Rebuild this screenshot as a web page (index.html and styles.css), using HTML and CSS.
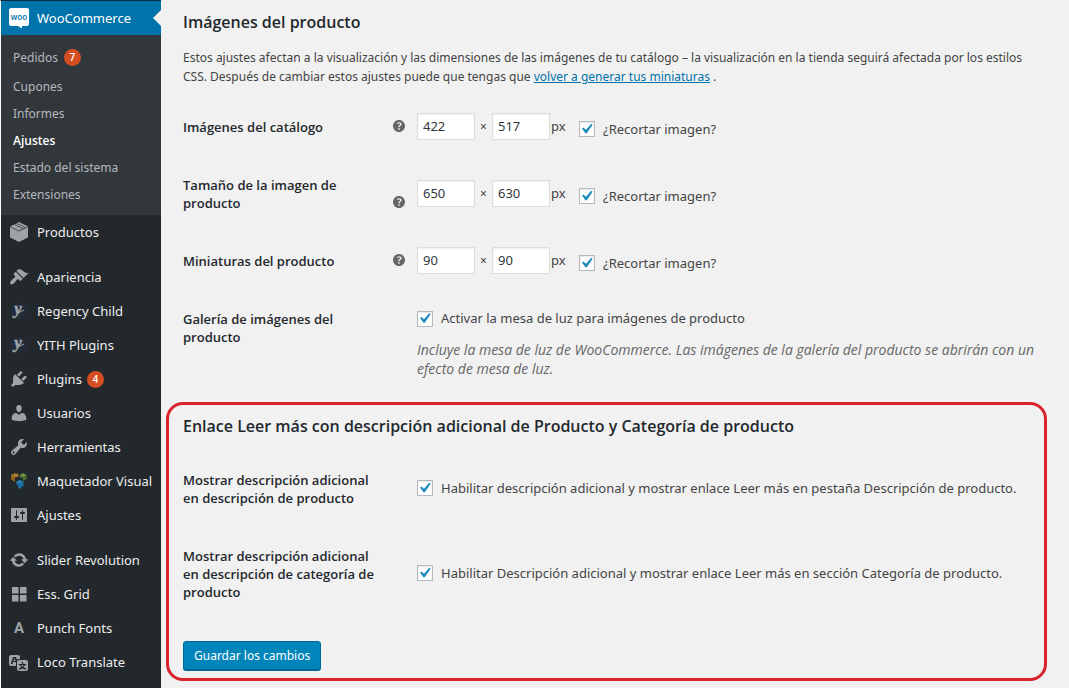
FILE: index.html
```html
<!DOCTYPE html>
<html lang="es">
<head>
<meta charset="utf-8">
<title>Ajustes de WooCommerce</title>
<link rel="stylesheet" href="styles.css">
</head>
<body>
<div class="admin">
  <nav class="sidebar" aria-label="Menú principal">
    <a class="item current" href="#">
      <svg class="icon" viewBox="0 0 20 20" aria-hidden="true"><path fill="#fff" d="M2 0h16a2 2 0 0 1 2 2v14a2 2 0 0 1-2 2h-5v2.500l-4-2.500H2a2 2 0 0 1-2-2V2a2 2 0 0 1 2-2z"/><text x="10" y="12" text-anchor="middle" class="woo-text">woo</text></svg>
      <span>WooCommerce</span>
    </a>
    <div class="submenu">
      <a class="sub" href="#">Pedidos <span class="badge">7</span></a>
      <a class="sub" href="#">Cupones</a>
      <a class="sub" href="#">Informes</a>
      <a class="sub active" href="#">Ajustes</a>
      <a class="sub" href="#">Estado del sistema</a>
      <a class="sub" href="#">Extensiones</a>
    </div>
    <div class="group">
      <a class="item" href="#"><svg class="icon" viewBox="0 0 20 20" aria-hidden="true"><path d="M10 0l9 4.500v11L10 20l-9-4.500v-11z"/><path fill="none" stroke="#23282d" stroke-width=".7" d="M1 4.700l9 4.300 9-4.300M5.300 2.400l9 4.400M7.500 1.300l9 4.400"/></svg><span>Productos</span></a>
    </div>
    <div class="group">
      <a class="item" href="#"><svg class="icon" viewBox="0 0 20 20" aria-hidden="true"><path d="M14.480 11.060L7.410 3.990l1.500-1.500c.5-.56 2.300-.47 3.510.32 1.210.8 1.430 1.280 2.910 2.100 1.180.64 2.450 1.260 4.450.85zm-.71.71L6.700 4.700 4.930 6.470c-.39.39-.39 1.020 0 1.410l1.060 1.060c.39.39.39 1.030 0 1.420-.6.6-1.430 1.110-2.210 1.690-.35.26-.7.53-1.010.84C1.430 14.230.4 16.080 1.400 17.070c.99 1 2.840-.03 4.180-1.360.31-.31.58-.66.85-1.020.57-.78 1.080-1.610 1.690-2.210.39-.39 1.020-.39 1.410 0l1.060 1.060c.39.39 1.020.39 1.410 0z"/></svg><span>Apariencia</span></a>
      <a class="item" href="#"><svg class="icon" viewBox="0 0 20 20" aria-hidden="true"><circle cx="10" cy="10" r="8" fill="#232c3b"/><text x="9" y="13" text-anchor="middle" class="yith">y</text><path d="M9 12l6-3" stroke="#9ea3a8" stroke-width="1"/></svg><span>Regency Child</span></a>
      <a class="item" href="#"><svg class="icon" viewBox="0 0 20 20" aria-hidden="true"><circle cx="10" cy="10" r="8" fill="#232c3b"/><text x="9" y="13" text-anchor="middle" class="yith">y</text><path d="M9 12l6-3" stroke="#9ea3a8" stroke-width="1"/></svg><span>YITH Plugins</span></a>
      <a class="item" href="#"><svg class="icon" viewBox="0 0 20 20" aria-hidden="true"><path d="M13.110 4.360L9.870 7.600 8 5.730l3.240-3.240c.35-.34 1.050-.2 1.560.32.52.51.66 1.210.31 1.550zm-8 1.770l.91-1.120 9.010 9.010-1.190.84c-.71.71-2.630 1.160-3.820 1.160H6.140L4.900 17.260c-.59.59-1.540.59-2.120 0-.59-.58-.59-1.530 0-2.120l1.240-1.240v-3.880c0-1.130.4-3.190 1.090-3.890zm7.260 3.970l3.240-3.240c.34-.35 1.040-.21 1.550.31.52.51.66 1.210.31 1.550l-3.240 3.250z"/></svg><span>Plugins</span><span class="badge">4</span></a>
      <a class="item" href="#"><svg class="icon" viewBox="0 0 20 20" aria-hidden="true"><path d="M10 9.250c-2.270 0-2.730-3.440-2.730-3.440C7 4.020 7.820 2 9.970 2c2.160 0 2.980 2.020 2.710 3.810 0 0-.41 3.440-2.680 3.440zm0 2.570L12.720 10c2.390 0 4.520 2.330 4.520 4.530v2.490s-3.650 1.130-7.240 1.130c-3.650 0-7.240-1.130-7.240-1.130v-2.490c0-2.250 1.940-4.480 4.470-4.480z"/></svg><span>Usuarios</span></a>
      <a class="item" href="#"><svg class="icon" viewBox="0 0 20 20" aria-hidden="true"><path d="M16.680 9.770c-1.340 1.340-3.300 1.670-4.950.99l-5.410 6.520c-.99.99-2.590.99-3.580 0s-.99-2.590 0-3.570l6.520-5.420c-.68-1.650-.35-3.610.99-4.950 1.280-1.280 3.120-1.620 4.720-1.060l-2.890 2.890 2.820 2.820 2.860-2.870c.53 1.580.18 3.390-1.080 4.650zM3.810 16.210c.4.39 1.040.39 1.430 0 .4-.4.4-1.040 0-1.430-.39-.4-1.030-.4-1.430 0-.39.39-.39 1.030 0 1.430z"/></svg><span>Herramientas</span></a>
      <a class="item" href="#"><svg class="icon" viewBox="0 0 20 20" aria-hidden="true"><path fill="#a8792a" d="M2 4l3.500-1.800L9.500 3v2.500L6 6.500v4L2 8.500z"/><path fill="#8f631f" d="M2 4l4 2.500v4L2 8.500z"/><path fill="#6f9440" d="M10.500 4.500L14 2l3.500 2-3.500 2.500z"/><path fill="#4b7030" d="M17.500 4v4L14 10V6.500l-3.500-2v1.500l2 1.500z"/><path fill="#2888b8" d="M7 11l3.500-2 4 1.500-4 2.500z"/><path fill="#1b6fa0" d="M14.500 10.500v4.500L10.500 18v-5zM7 11l3.500 2v5L9 16.500V14l-2-1z"/></svg><span>Maquetador Visual</span></a>
      <a class="item" href="#"><svg class="icon" viewBox="0 0 20 20" aria-hidden="true"><path d="M18 16V4c0-.55-.45-1-1-1H3c-.55 0-1 .45-1 1v12c0 .55.45 1 1 1h14c.55 0 1-.45 1-1zM8 11h1c.55 0 1 .45 1 1s-.45 1-1 1H8v1.500c0 .28-.22.5-.5.5s-.5-.22-.5-.5V13H6c-.55 0-1-.45-1-1s.45-1 1-1h1V5.500c0-.28.22-.5.5-.5s.5.22.5.5V11zm5-2h-1c-.55 0-1-.45-1-1s.45-1 1-1h1V5.500c0-.28.22-.5.5-.5s.5.22.5.5V7h1c.55 0 1 .45 1 1s-.45 1-1 1h-1v5.500c0 .28-.22.5-.5.5s-.5-.22-.5-.5V9z"/></svg><span>Ajustes</span></a>
    </div>
    <div class="group">
      <a class="item" href="#"><svg class="icon" viewBox="0 0 20 20" aria-hidden="true"><path d="M10.200 3.280c3.530 0 6.430 2.610 6.920 6h2.080l-3.500 4-3.500-4h2.320c-.45-1.970-2.210-3.450-4.320-3.450-1.450 0-2.730.71-3.540 1.780L4.950 5.660C6.230 4.200 8.110 3.280 10.200 3.280zm-.4 13.440c-3.520 0-6.430-2.610-6.920-6H.8l3.500-4c1.170 1.330 2.330 2.670 3.500 4H5.480c.45 1.970 2.210 3.450 4.320 3.450 1.450 0 2.730-.71 3.540-1.780l1.710 1.950c-1.280 1.460-3.150 2.380-5.250 2.380z"/></svg><span>Slider Revolution</span></a>
      <a class="item" href="#"><svg class="icon" viewBox="0 0 20 20" aria-hidden="true"><path d="M3 3h6.500v6.500H3zM11 3h6.500v6.500H11zM3 11h6.500v6.500H3zM11 11h6.500v6.500H11z"/></svg><span>Ess. Grid</span></a>
      <a class="item" href="#"><svg class="icon" viewBox="0 0 20 20" aria-hidden="true"><text x="10" y="15" text-anchor="middle" class="letter">A</text></svg><span>Punch Fonts</span></a>
      <a class="item" href="#"><svg class="icon" viewBox="0 0 20 20" aria-hidden="true"><path d="M11 7H9.490c-.63 0-1.250.3-1.590.7L7 5H4.130l-2.390 7h1.690l.74-2H7v4H2c-1.100 0-2-.9-2-2V5c0-1.100.9-2 2-2h7c1.100 0 2 .9 2 2v2zM6.510 9H4.490l1-2.930zM10 8h7c1.100 0 2 .9 2 2v7c0 1.100-.9 2-2 2h-7c-1.100 0-2-.9-2-2v-7c0-1.100.9-2 2-2zm7.250 5v-1.080h-3.170V9.750h-1.160v2.170H9.750V13h1.280c.11.85.56 1.850 1.280 2.620-.87.36-1.890.62-2.310.62-.01.02.22.97.2 1.460.84 0 2.210-.5 3.280-1.150 1.090.65 2.480 1.150 3.340 1.150-.02-.49.2-1.440.2-1.460-.43 0-1.490-.27-2.380-.63.7-.77 1.140-1.770 1.250-2.610h1.360zm-3.810 1.930c-.5-.46-.85-1.130-1.010-1.930h2.090c-.17.8-.51 1.470-1 1.930l-.04.03s-.03-.02-.04-.03z"/></svg><span>Loco Translate</span></a>
    </div>
  </nav>

  <main class="content">
    <svg class="defs" aria-hidden="true"><symbol id="help" viewBox="3 3 14 14"><path d="M17 10c0-3.870-3.140-7-7-7-3.870 0-7 3.130-7 7s3.130 7 7 7c3.860 0 7-3.130 7-7zm-6.300 1.480H9.140v-.43c0-.38.08-.7.24-.98s.46-.57.88-.89c.41-.29.68-.53.81-.71.14-.18.2-.39.2-.62 0-.25-.09-.44-.28-.58-.19-.13-.45-.19-.79-.19-.58 0-1.250.19-2 .57l-.64-1.280c.87-.49 1.800-.74 2.770-.74.81 0 1.450.2 1.920.58.48.39.71.91.71 1.550 0 .43-.09.8-.29 1.110-.19.32-.57.67-1.110 1.060-.38.28-.61.49-.71.63-.1.15-.15.34-.15.57v.35zm-1.470 2.740c-.18-.17-.27-.42-.27-.73 0-.33.08-.58.26-.75s.43-.25.77-.25c.32 0 .57.09.75.26s.27.42.27.74c0 .3-.09.55-.27.72-.18.18-.43.27-.75.27-.33 0-.58-.09-.76-.26z"/></symbol></svg>
    <form class="form">
      <section class="panel">
        <h2 class="title">Imágenes del producto</h2>
        <p class="intro">Estos ajustes afectan a la visualización y las dimensiones de las imágenes de tu catálogo – la visualización en la tienda seguirá afectada por los estilos CSS. Después de cambiar estos ajustes puede que tengas que <a class="link" href="#">volver a generar tus miniaturas</a> .</p>
        <div class="row">
          <div class="head"><label for="cat-w">Imágenes del catálogo</label><svg class="tip" aria-hidden="true"><use href="#help"/></svg></div>
          <div class="field size"><input class="num" id="cat-w" type="text" value="422"><span class="times">×</span><input class="num" type="text" value="517" aria-label="Alto del catálogo"><span class="unit">px</span><label class="check"><input class="box" type="checkbox" checked>¿Recortar imagen?</label></div>
        </div>
        <div class="row">
          <div class="head"><label for="prod-w">Tamaño de la imagen de producto</label><svg class="tip" aria-hidden="true"><use href="#help"/></svg></div>
          <div class="field size"><input class="num" id="prod-w" type="text" value="650"><span class="times">×</span><input class="num" type="text" value="630" aria-label="Alto del producto"><span class="unit">px</span><label class="check"><input class="box" type="checkbox" checked>¿Recortar imagen?</label></div>
        </div>
        <div class="row">
          <div class="head"><label for="min-w">Miniaturas del producto</label><svg class="tip" aria-hidden="true"><use href="#help"/></svg></div>
          <div class="field size"><input class="num" id="min-w" type="text" value="90"><span class="times">×</span><input class="num" type="text" value="90" aria-label="Alto de miniaturas"><span class="unit">px</span><label class="check"><input class="box" type="checkbox" checked>¿Recortar imagen?</label></div>
        </div>
        <div class="row">
          <div class="head"><label for="lightbox">Galería de imágenes del producto</label></div>
          <div class="field tall">
            <label class="check"><input class="box" id="lightbox" type="checkbox" checked>Activar la mesa de luz para imágenes de producto</label>
            <p class="note">Incluye la mesa de luz de WooCommerce. Las imágenes de la galería del producto se abrirán con un efecto de mesa de luz.</p>
          </div>
        </div>
      </section>

      <section class="panel marked">
        <h2 class="title">Enlace Leer más con descripción adicional de Producto y Categoría de producto</h2>
        <div class="row">
          <div class="head"><label for="more-prod">Mostrar descripción adicional en descripción de producto</label></div>
          <div class="field"><label class="check"><input class="box" id="more-prod" type="checkbox" checked>Habilitar descripción adicional y mostrar enlace Leer más en pestaña Descripción de producto.</label></div>
        </div>
        <div class="row">
          <div class="head"><label for="more-cat">Mostrar descripción adicional en descripción de categoría de producto</label></div>
          <div class="field"><label class="check"><input class="box" id="more-cat" type="checkbox" checked>Habilitar Descripción adicional y mostrar enlace Leer más en sección Categoría de producto.</label></div>
        </div>
        <button class="save" type="submit">Guardar los cambios</button>
      </section>
    </form>
  </main>
</div>
</body>
</html>
```
FILE: styles.css
```css
* { box-sizing: border-box; }
body {
  margin: 0;
  background: #f1f1f1;
  color: #444;
  font: 13px/19px "Noto Sans", "Open Sans", sans-serif;
}
.admin { display: flex; min-height: 100vh; }

/* Sidebar */
.sidebar {
  flex: 0 0 161px;
  border-left: 1px solid #fff;
  border-top: 1px solid #0d2c40;
  background: #23282d;
}
.item {
  display: flex;
  align-items: center;
  height: 34px;
  padding-left: 8px;
  gap: 8px;
  color: #eee;
  line-height: 18px;
  text-decoration: none;
  white-space: nowrap;
}
.current { position: relative; background: #0073aa; color: #fff; }
.current::after {
  content: "";
  position: absolute;
  right: 0;
  top: 50%;
  margin-top: -8px;
  border: 8px solid transparent;
  border-right-color: #f1f1f1;
  border-left-width: 0;
}
.icon { flex: none; width: 20px; height: 20px; fill: #9ea3a8; overflow: visible; }
.woo-text { font: 600 8px "Open Sans", sans-serif; fill: #0073aa; }
.yith { font: italic bold 17px "Liberation Serif", serif; stroke: #9ea3a8; stroke-width: .5px; }
.letter { font: bold 15px Roboto, sans-serif; }
.submenu { background: #32373c; padding: 6px 0 7px; }
.sub {
  display: flex;
  align-items: center;
  height: 27px;
  padding-left: 12px;
  gap: 6px;
  color: #b4b9be;
  font-size: 12px;
  text-decoration: none;
}
.sub:first-child { height: 32px; }
.active { color: #fff; font-family: "Open Sans", sans-serif; font-weight: 600; }
.badge {
  width: 17px;
  height: 17px;
  border-radius: 50%;
  background: #d54e21;
  color: #fff;
  font: 600 10px/17px "Open Sans", sans-serif;
  text-align: center;
}
.item .badge { margin-left: -3px; }
.group + .group { margin-top: 11px; }

/* Settings form */
.content { flex: 1; min-width: 0; padding: 0 22px 7px 5px; }
.defs { display: none; }
.panel { padding: 0 8px 0 17px; }
.title {
  margin: 0;
  padding-top: 10px;
  color: #23282d;
  font: 600 16px/24px "Open Sans", sans-serif;
}
.intro { margin: 14px 0 12px; font-size: 12px; }
.link { color: #0073aa; }
.row { display: grid; grid-template-columns: 234px 1fr; }
.head {
  display: flex;
  align-items: flex-end;
  align-self: start;
  justify-content: space-between;
  padding: 20px 12px 20px 0;
  color: #23282d;
  font: 600 13px/18px "Open Sans", sans-serif;
}
.head label { max-width: 200px; }
.tip { flex: none; width: 12px; height: 12px; margin-bottom: 4px; fill: #666; }
.field { align-self: center; padding-bottom: 2px; }
.tall { align-self: start; padding: 19px 0 0; }
.size { display: flex; align-items: center; }
.num {
  width: 58px;
  height: 27px;
  padding: 0 5px;
  border: 1px solid #ddd;
  background: #fff;
  box-shadow: inset 0 1px 2px rgba(0, 0, 0, .07);
  color: #32373c;
  font: inherit;
}
.times { width: 17px; text-align: center; font-size: 12px; }
.unit { width: 29px; padding-left: 1px; }
.check { display: flex; align-items: center; gap: 8px; }
.size .check { padding-top: 6px; }
.box {
  appearance: none;
  flex: none;
  display: grid;
  place-content: center;
  width: 16px;
  height: 16px;
  margin: 0;
  border: 1px solid #b4b9be;
  background: #fff;
  box-shadow: inset 0 1px 2px rgba(0, 0, 0, .1);
}
.box:checked::before {
  content: "";
  width: 20px;
  height: 20px;
  background: #1e8cbe;
  clip-path: polygon(71% 24%, 78% 29%, 49% 71%, 42% 71%, 25% 48%, 32% 42%, 45% 54%);
}
.note { margin: 12px 0 0; color: #666; font: italic 14px/19px "Open Sans", sans-serif; }
.marked {
  margin-top: 24px;
  padding: 0 8px 8px 14px;
  border: 3px solid #d8232a;
  border-radius: 17px;
}
.marked .title { padding: 9px 0 13px; }
.save {
  display: block;
  height: 29px;
  margin-top: 20px;
  padding: 0 10px;
  border: 1px solid #006799;
  border-radius: 3px;
  background: #0085ba;
  box-shadow: 0 1px 0 #006799;
  color: #fff;
  font: inherit;
  font-size: 12px;
}
```
